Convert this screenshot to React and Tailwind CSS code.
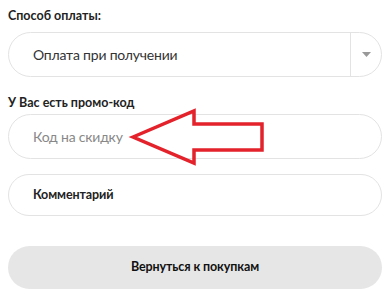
import React from "react";

const PromoArrow = () => (
  <svg
    className="absolute left-[120px] top-[-6px] pointer-events-none"
    width="140"
    height="58"
    viewBox="0 0 140 58"
  >
    <polygon
      points="5,29 66,3 66,16 134,16 134,42 66,42 66,55"
      fill="none"
      stroke="#e3222b"
      strokeWidth="3.5"
      strokeLinejoin="miter"
    />
  </svg>
);

export default function App() {
  return (
    <div
      className="w-[390px] h-[300px] bg-white px-2 pt-[8px] text-[#222]"
      style={{ fontFamily: "Lato, 'Noto Sans', sans-serif" }}
    >
      {/* Payment method */}
      <p className="text-[12.5px] font-bold leading-[16px]">Способ оплаты:</p>
      <div className="mt-[8px] h-[45px] flex items-center rounded-full border border-[#e3e3e3]">
        <span className="flex-1 pl-[24px] text-[14px] tracking-[-0.2px] text-[#333]">Оплата при получении</span>
        <div className="w-[31px] h-full border-l border-[#e3e3e3] flex items-center justify-center">
          <svg width="9" height="5" viewBox="0 0 9 5">
            <polygon points="0,0 9,0 4.5,5" fill="#999" />
          </svg>
        </div>
      </div>

      {/* Promo code */}
      <p className="mt-[18px] text-[12.5px] font-bold leading-[16px]">У Вас есть промо-код</p>
      <div className="relative mt-[3px]">
        <div className="h-[45px] flex items-center rounded-full border border-[#e3e3e3]">
          <span className="pl-[24px] text-[14px] tracking-[-0.2px] text-[#888]">Код на скидку</span>
        </div>
        <PromoArrow />
      </div>

      {/* Comment */}
      <div className="mt-[15px] h-[42px] flex items-center rounded-full border border-[#e3e3e3]">
        <span className="pl-[24px] text-[12.5px] tracking-[-0.1px] font-bold text-[#222]">Комментарий</span>
      </div>

      {/* Back button */}
      <button className="mt-[30px] w-full h-[43px] rounded-full bg-[#e6e6e6] text-[12.5px] tracking-[-0.1px] font-bold text-[#111]">
        Вернуться к покупкам
      </button>
    </div>
  );
}
